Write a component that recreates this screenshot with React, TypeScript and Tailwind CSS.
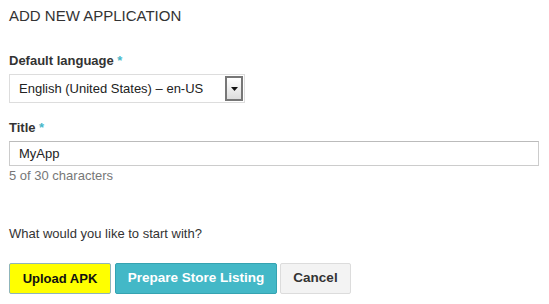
export default function App() {
  return (
    <div
      className="w-[549px] h-[304px] bg-white pl-[9px] pt-[6px] text-[#222]"
      style={{ fontFamily: '"Liberation Sans", Arial, sans-serif' }}
    >
      <h1 className="text-[15px] leading-[20px] text-[#333] uppercase">Add new application</h1>

      <div className="mt-[27px] text-[13px] leading-[16px] font-bold text-[#333]">
        Default language <span className="text-[#48b7c9]">*</span>
      </div>
      <div className="mt-[5px] w-[236px] h-[29px] border border-[#ddd] flex items-center justify-between pl-[9px] pr-[1px]">
        <span className="text-[13px] text-[#222]">English (United States) – en-US</span>
        <div className="w-[18px] h-[25px] border-2 border-[#777] bg-gradient-to-b from-white to-[#ddd] flex items-center justify-center">
          <svg width="7" height="4" viewBox="0 0 7 4">
            <path d="M0 0h7L3.5 4z" fill="#111" />
          </svg>
        </div>
      </div>

      <div className="mt-[17px] text-[13px] leading-[16px] font-bold text-[#333]">
        Title <span className="text-[#48b7c9]">*</span>
      </div>
      <div className="mt-[5px] w-[530px] h-[25px] border border-[#ccc] border-t-[#bbb] flex items-center pl-[9px] text-[13px] text-[#222]">
        MyApp
      </div>
      <div className="mt-[2px] text-[13px] leading-[16px] text-[#777]">5 of 30 characters</div>

      <div className="mt-[42px] text-[13px] leading-[16px] text-[#333]">What would you like to start with?</div>

      <div className="mt-[21px] flex">
        <button className="w-[102px] h-[31px] bg-[#ffff00] border border-[#8fb5ba] rounded-[2px] text-[13px] font-bold text-[#111]">
          Upload APK
        </button>
        <button className="ml-[4px] w-[162px] h-[31px] bg-[#43b8c7] border border-[#35a3b1] rounded-[2px] text-[13.5px] font-bold text-white">
          Prepare Store Listing
        </button>
        <button className="ml-[3px] w-[71px] h-[31px] bg-[#f3f3f3] border border-[#dcdcdc] rounded-[2px] text-[13.5px] font-bold text-[#333]">
          Cancel
        </button>
      </div>
    </div>
  );
}
